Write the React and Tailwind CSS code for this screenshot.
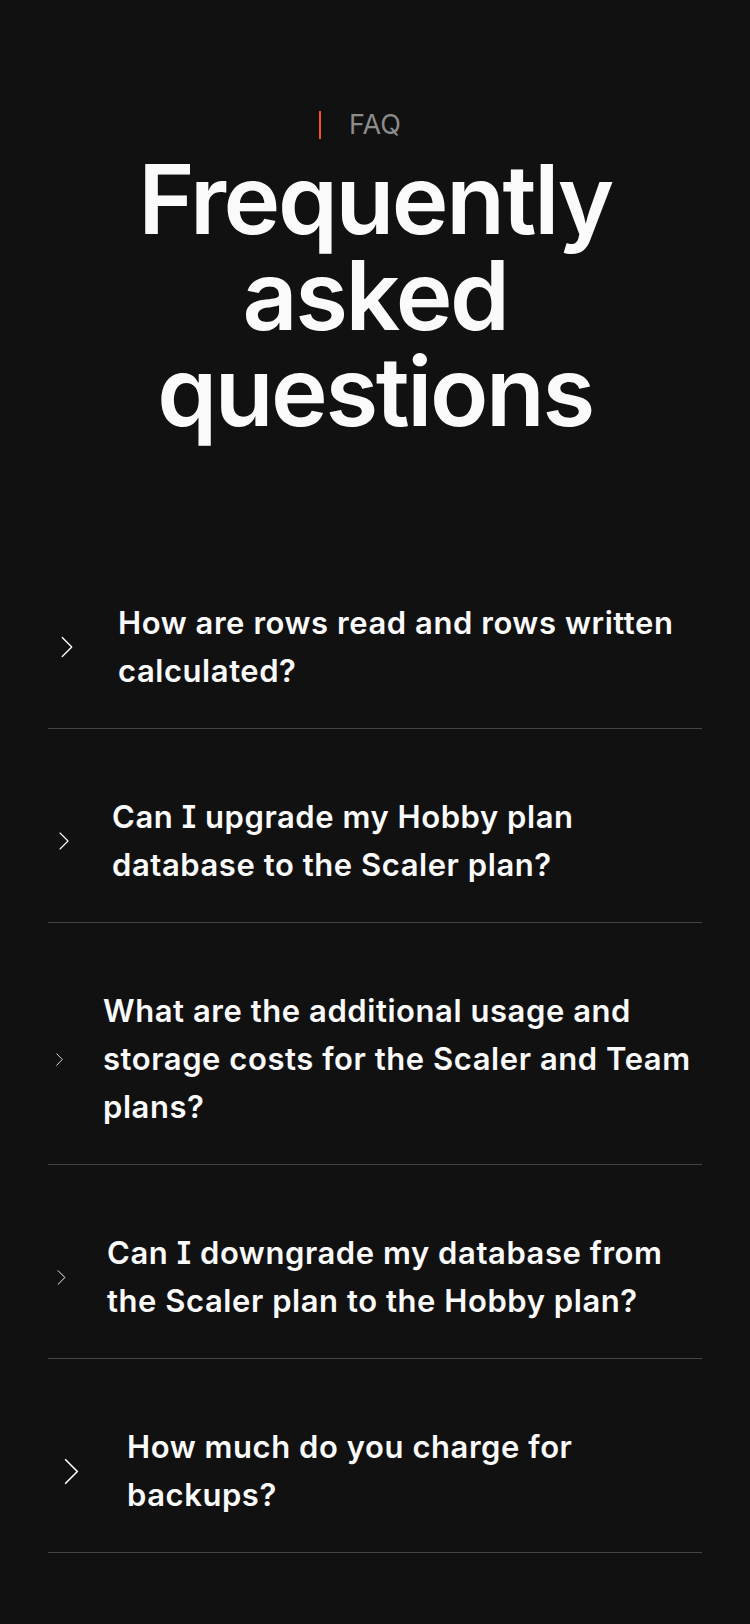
const faqs = [
  { q: 'How are rows read and rows written calculated?', box: 'w-[38px] h-[38px]' },
  { q: 'Can I upgrade my Hobby plan database to the Scaler plan?', box: 'w-[32px] h-[32px]' },
  { q: 'What are the additional usage and storage costs for the Scaler and Team plans?', box: 'w-[23px] h-[23px]' },
  { q: 'Can I downgrade my database from the Scaler plan to the Hobby plan?', box: 'w-[27px] h-[27px]' },
  { q: 'How much do you charge for backups?', box: 'w-[47px] h-[47px]' },
];

function Chevron({ className }) {
  return (
    <svg
      viewBox="0 0 24 24"
      fill="none"
      stroke="currentColor"
      strokeWidth="0.85"
      strokeLinecap="round"
      strokeLinejoin="round"
      className={className}
    >
      <path d="m9 18 6-6-6-6" />
    </svg>
  );
}

export default function App() {
  return (
    <div className="min-h-screen bg-[#111111] text-[#fafafa] font-['Inter','Noto_Sans',sans-serif]">
      <section className="px-12 pt-[111px] pb-16">
        <div className="flex justify-center">
          <span className="relative text-[27px] leading-[28px] text-[#8c8c8c]">
            <span className="absolute -left-[30px] top-0 h-[28px] w-[2px] bg-[#f0561d]" />
            FAQ
          </span>
        </div>
        <h2 className="mt-3 text-center text-8xl leading-none font-semibold tracking-tight">
          Frequently
          <br />
          asked
          <br />
          questions
        </h2>

        <div className="mt-24">
          {faqs.map((item) => (
            <button
              key={item.q}
              className="flex w-full items-center gap-8 border-b border-[#444444] pt-16 pb-[33px] text-left"
            >
              <span className="flex shrink-0 items-center justify-center">
                <Chevron className={item.box + ' shrink-0 text-white'} />
              </span>
              <span className="text-[31px] leading-[48px] font-semibold tracking-[0.018em] [font-feature-settings:'cv08']">
                {item.q}
              </span>
            </button>
          ))}
        </div>
      </section>
    </div>
  );
}
